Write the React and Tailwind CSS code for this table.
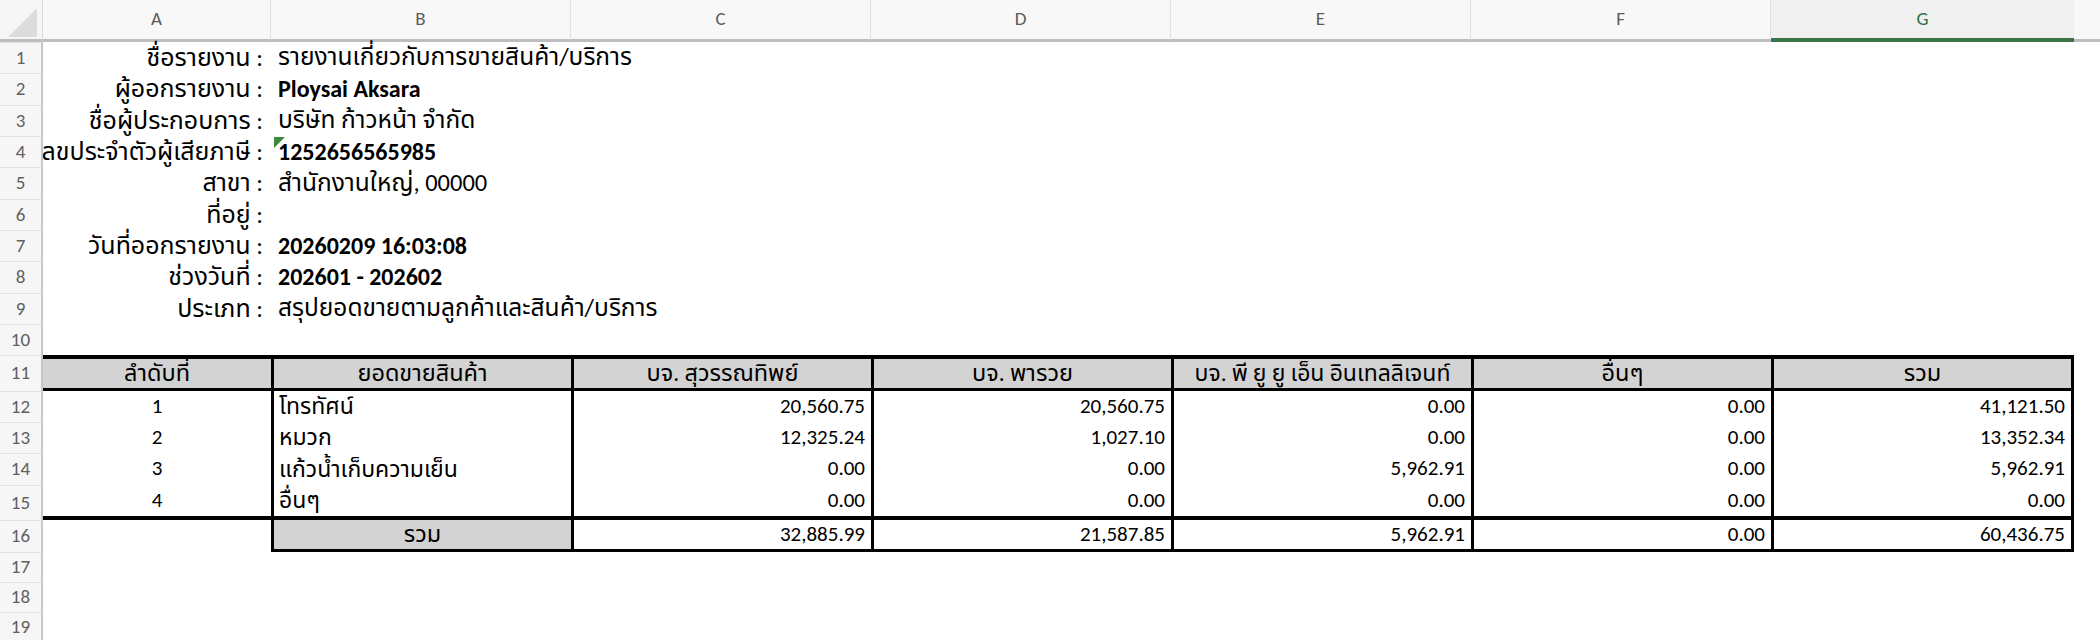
const COLS = [
  { k: 'A', w: 'w-[228px]' },
  { k: 'B', w: 'w-[300px]' },
  { k: 'C', w: 'w-[300px]' },
  { k: 'D', w: 'w-[300px]' },
  { k: 'E', w: 'w-[300px]' },
  { k: 'F', w: 'w-[300px]' },
  { k: 'G', w: 'w-[303px]' },
];

const INFO = [
  { n: 1, h: 'h-[31px]', label: 'ชื่อรายงาน :', value: 'รายงานเกี่ยวกับการขายสินค้า/บริการ' },
  { n: 2, h: 'h-[32px]', label: 'ผู้ออกรายงาน :', value: 'Ploysai Aksara', bold: true },
  { n: 3, h: 'h-[31px]', label: 'ชื่อผู้ประกอบการ :', value: 'บริษัท ก้าวหน้า จำกัด' },
  { n: 4, h: 'h-[31px]', label: 'เลขประจำตัวผู้เสียภาษี :', value: '1252656565985', bold: true, flag: true },
  { n: 5, h: 'h-[32px]', label: 'สาขา :', value: 'สำนักงานใหญ่, 00000' },
  { n: 6, h: 'h-[31px]', label: 'ที่อยู่ :', value: '' },
  { n: 7, h: 'h-[31px]', label: 'วันที่ออกรายงาน :', value: '20260209 16:03:08', bold: true },
  { n: 8, h: 'h-[32px]', label: 'ช่วงวันที่ :', value: '202601 - 202602', bold: true },
  { n: 9, h: 'h-[31px]', label: 'ประเภท :', value: 'สรุปยอดขายตามลูกค้าและสินค้า/บริการ' },
  { n: 10, h: 'h-[31px]', label: '', value: '' },
];

const HEADS = ['ลำดับที่', 'ยอดขายสินค้า', 'บจ. สุวรรณทิพย์', 'บจ. พารวย', 'บจ. พี ยู ยู เอ็น อินเทลลิเจนท์', 'อื่นๆ', 'รวม'];

const ROWS = [
  { n: 12, h: 'h-[31px]', cells: ['1', 'โทรทัศน์', '20,560.75', '20,560.75', '0.00', '0.00', '41,121.50'] },
  { n: 13, h: 'h-[31px]', cells: ['2', 'หมวก', '12,325.24', '1,027.10', '0.00', '0.00', '13,352.34'] },
  { n: 14, h: 'h-[32px]', cells: ['3', 'แก้วน้ำเก็บความเย็น', '0.00', '0.00', '5,962.91', '0.00', '5,962.91'] },
  { n: 15, h: 'h-[35px]', cells: ['4', 'อื่นๆ', '0.00', '0.00', '0.00', '0.00', '0.00'], last: true },
];

const TOTAL = ['32,885.99', '21,587.85', '5,962.91', '0.00', '60,436.75'];

function RowHead({ n }) {
  return (
    <div className="relative z-10 w-[43px] shrink-0 h-full flex items-center justify-center bg-[#f6f6f6] border-r-2 border-r-[#c6c6c6] border-t border-t-[#e2e2e2] text-[19px] text-[#5f5f5f]">
      {n}
    </div>
  );
}

export default function App() {
  return (
    <div className="w-[2100px] h-[640px] overflow-hidden bg-white text-black font-[Carlito,'Open_Sans','Noto_Sans_Thai','Noto_Sans',sans-serif] text-[21px]">
      {/* column letters */}
      <div className="flex h-[42px]">
        <div className="relative w-[43px] shrink-0 bg-[#f6f6f6] border-r border-r-[#dadada] border-b-[3px] border-b-[#bdbdbd]">
          <svg className="absolute left-[8px] top-[8px]" width="29" height="29" viewBox="0 0 29 29">
            <polygon points="29,0 29,29 0,29" fill="#dcdcdc" />
          </svg>
        </div>
        {COLS.map((c) =>
          c.k === 'G' ? (
            <div key={c.k} className={`${c.w} shrink-0 flex items-center justify-center bg-[#f0f0f0] border-b-[4px] border-b-[#3a7549] text-[19px] text-[#2f6e43]`}>
              {c.k}
            </div>
          ) : (
            <div key={c.k} className={`${c.w} shrink-0 flex items-center justify-center bg-[#f8f8f8] border-r border-r-[#e1e1e1] border-b-[3px] border-b-[#bdbdbd] text-[19px] text-[#5c5c5c]`}>
              {c.k}
            </div>
          )
        )}
        <div className="flex-1 bg-[#f8f8f8] border-b-[3px] border-b-[#bdbdbd]" />
      </div>

      {/* report info */}
      {INFO.map((r) => (
        <div key={r.n} className={`flex ${r.h}`}>
          <RowHead n={r.n} />
          <div className="w-[228px] shrink-0 flex items-center justify-end pr-[8px] whitespace-nowrap text-[25px]">
            {r.label}
          </div>
          <div className={`relative flex-1 flex items-center pl-[7px] whitespace-nowrap ${r.bold ? 'font-bold text-[24px]' : 'text-[24.5px]'}`}>
            {r.flag && (
              <span className="absolute left-[3px] top-[1px] w-[11px] h-[11px] bg-[#3f8a3a] [clip-path:polygon(0_0,100%_0,0_100%)]" />
            )}
            {r.value}
          </div>
        </div>
      ))}

      {/* table header */}
      <div className="flex h-[36px]">
        <RowHead n={11} />
        <div className="flex border-t-[4px] border-b-[3px] border-black bg-[#d3d3d3]">
          {HEADS.map((h, i) => (
            <div
              key={i}
              className={`${COLS[i].w} shrink-0 flex items-center justify-center whitespace-nowrap overflow-hidden ${i === 4 ? 'text-[23px]' : 'text-[23.5px]'} ${i > 0 ? 'border-l-[3px] border-black' : ''} ${i === 6 ? 'border-r-[3px]' : ''}`}
            >
              {h}
            </div>
          ))}
        </div>
      </div>

      {/* table body */}
      {ROWS.map((r) => (
        <div key={r.n} className={`flex ${r.h}`}>
          <RowHead n={r.n} />
          <div className={`flex ${r.last ? 'border-b-[4px] border-black' : ''}`}>
            {r.cells.map((v, i) => (
              <div
                key={i}
                className={`${COLS[i].w} shrink-0 flex items-center whitespace-nowrap ${
                  i === 0 ? 'justify-center' : i === 1 ? 'justify-start pl-[5px] text-[23px]' : 'justify-end pr-[6px]'
                } ${i > 0 ? 'border-l-[3px] border-black' : ''} ${i === 6 ? 'border-r-[3px] border-black' : ''}`}
              >
                {v}
              </div>
            ))}
          </div>
        </div>
      ))}

      {/* totals */}
      <div className="flex h-[32px]">
        <RowHead n={16} />
        <div className="w-[228px] shrink-0" />
        <div className="w-[300px] shrink-0 flex items-center justify-center bg-[#d3d3d3] border-l-[3px] border-b-[3px] border-black text-[23.5px]">
          รวม
        </div>
        {TOTAL.map((v, i) => (
          <div
            key={i}
            className={`${i === 4 ? 'w-[303px] border-r-[3px]' : 'w-[300px]'} shrink-0 flex items-center justify-end pr-[6px] border-l-[3px] border-b-[3px] border-black`}
          >
            {v}
          </div>
        ))}
      </div>

      {[17, 18, 19].map((n) => (
        <div key={n} className="flex h-[30px]">
          <RowHead n={n} />
          <div className="flex-1" />
        </div>
      ))}
    </div>
  );
}
